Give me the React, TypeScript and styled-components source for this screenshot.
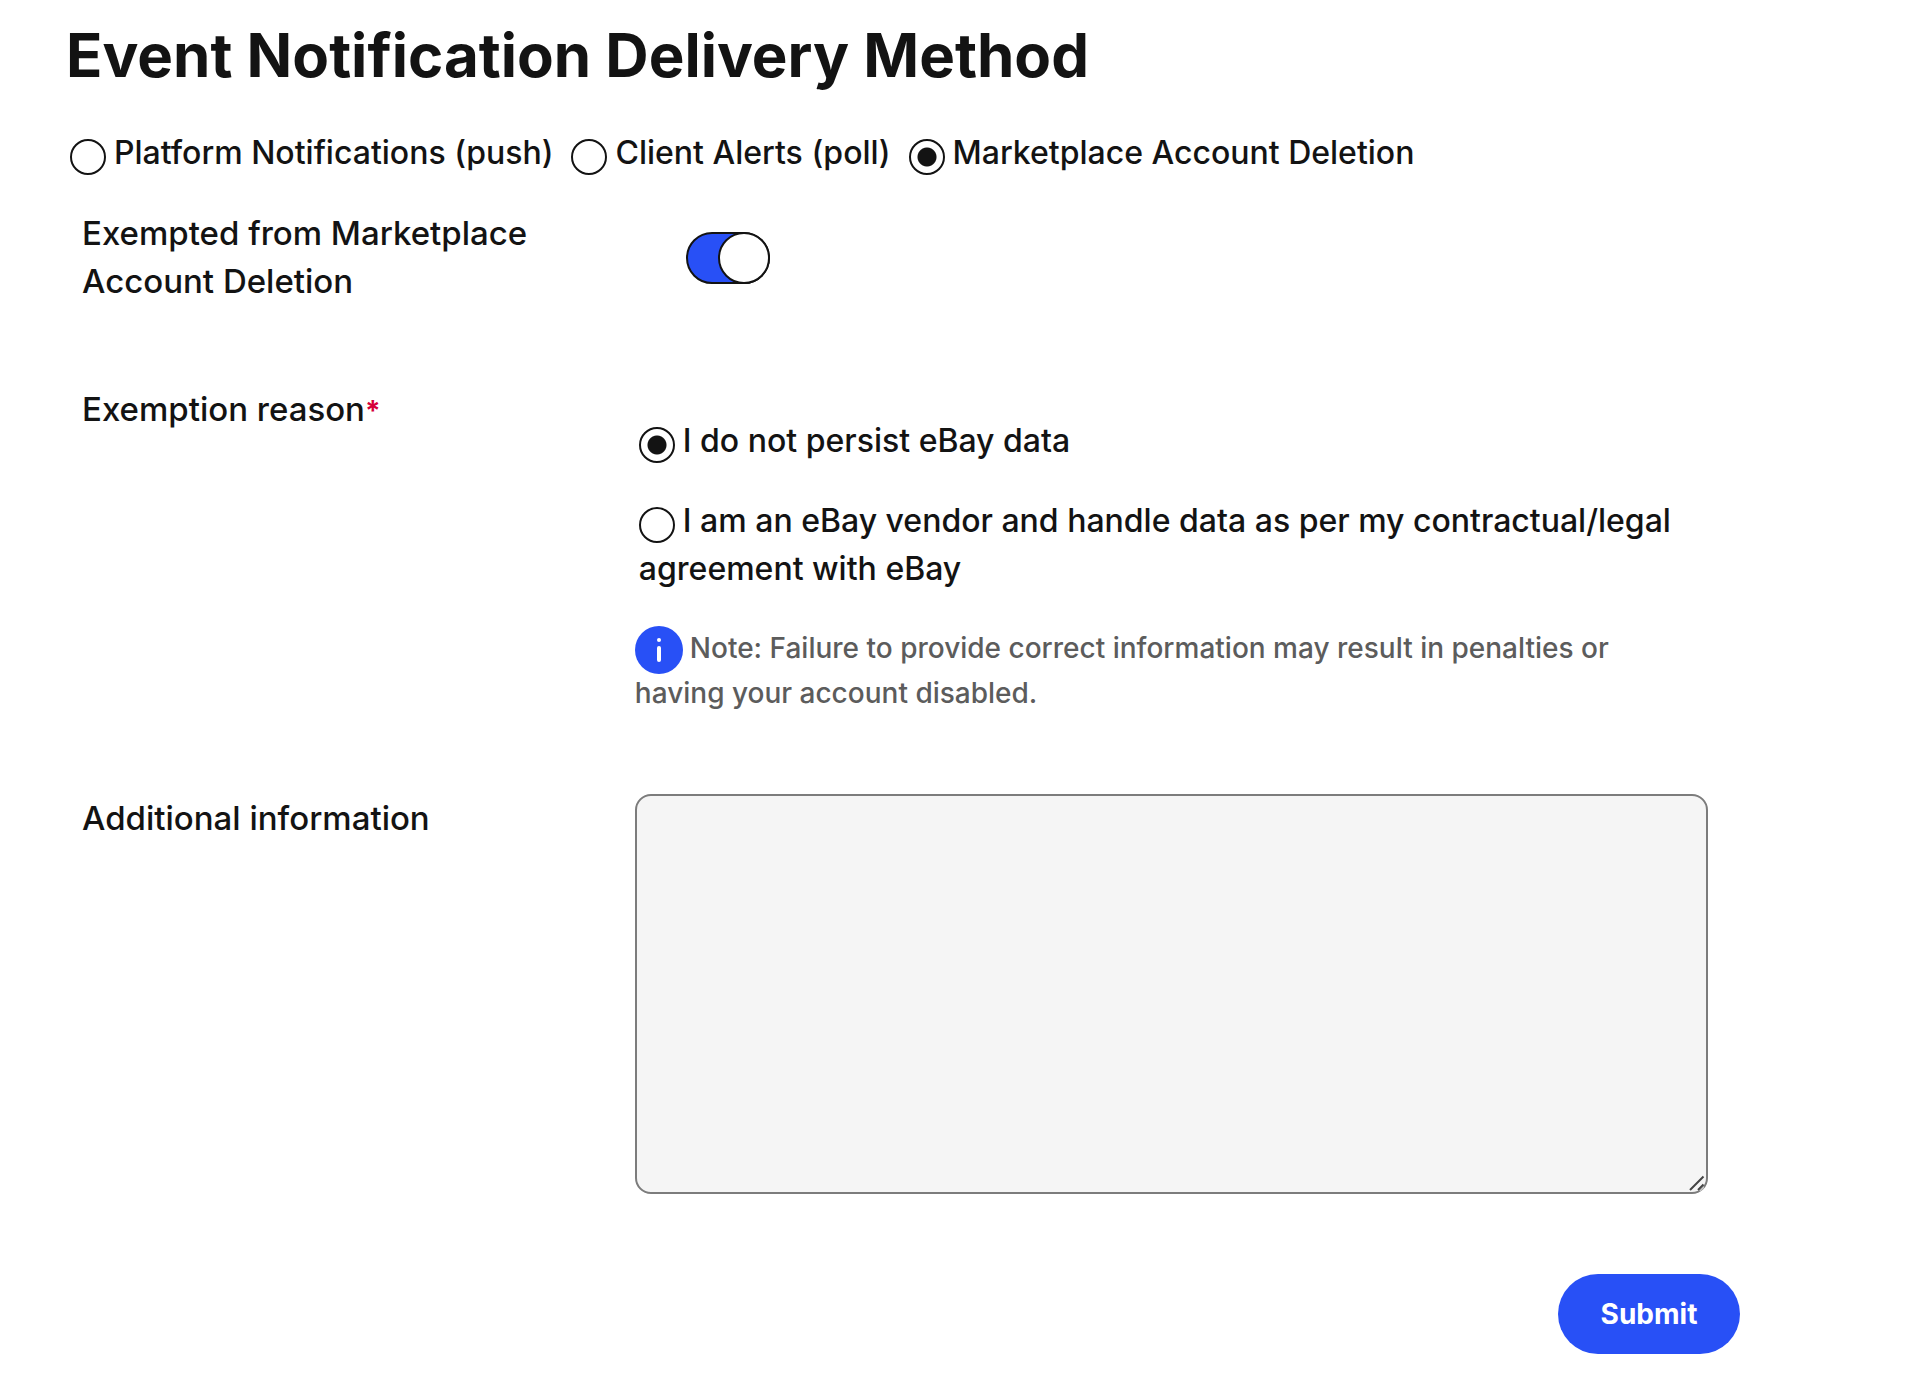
import React, { useState } from "react";
import styled, { createGlobalStyle } from "styled-components";

const ink = "#131313";
const blue = "#2850f6";

const GlobalStyle = createGlobalStyle`
  *, *::before, *::after { box-sizing: border-box; }
  body {
    margin: 0;
    background: #fff;
    color: ${ink};
    font-family: Inter, "Liberation Sans", sans-serif;
    font-size: 32px;
    font-weight: 500;
    line-height: 48px;
  }
`;

const Page = styled.main`
  padding: 17px 172px 20px 66px;
`;

const Title = styled.h1`
  margin: 0;
  font-size: 60px;
  font-weight: 700;
  line-height: 76px;
`;

const Methods = styled.fieldset`
  margin: 36px 0 0;
  padding: 0 0 0 4px;
  border: 0;
  display: flex;
  flex-wrap: wrap;
  column-gap: 18px;
`;

const HiddenLegend = styled.legend`
  position: absolute;
  width: 1px;
  height: 1px;
  overflow: hidden;
  clip-path: inset(50%);
`;

const Radio = styled.input`
  appearance: none;
  width: 36px;
  height: 36px;
  margin: 0 8px 0 0;
  border: 2px solid ${ink};
  border-radius: 50%;
  background: #fff;
  vertical-align: -11px;

  &:checked {
    background: radial-gradient(circle, ${ink} 0 9px, transparent 10px);
  }
`;

const Row = styled.div<{ $gap: number }>`
  display: grid;
  grid-template-columns: 34% 66%;
  align-items: start;
  margin-top: ${(p) => p.$gap}px;
  padding: 0 32px 0 16px;
`;

const Caption = styled.div`
  max-width: 480px;
  font-size: 33px;
`;

const Required = styled.span`
  color: #d5003a;
  font-size: 28px;
  font-weight: 700;
  line-height: 1;
`;

const Switch = styled.input`
  appearance: none;
  display: flex;
  justify-content: flex-end;
  width: 84px;
  height: 52px;
  margin: 23px 0 0 51px;
  border: 2px solid ${ink};
  border-radius: 26px;
  background: #fff;

  &::before {
    content: "";
    width: 52px;
    height: 52px;
    margin: -2px;
    border: 2px solid ${ink};
    border-radius: 50%;
    background: #fff;
  }

  &:checked { background: ${blue}; }
  &:not(:checked) { justify-content: flex-start; }
`;

const Reasons = styled.div`
  display: flex;
  flex-direction: column;
  gap: 32px;
  padding: 32px 0 0 4px;
`;

const Note = styled.p`
  margin: 33px 0 0;
  padding-right: 64px;
  color: #5c5c5c;
  font-size: 28px;
  line-height: 45px;
`;

const InfoIcon = styled.svg`
  width: 48px;
  height: 48px;
  margin: -8px 7px -8px 0;
  vertical-align: -8px;
`;

const TextAreaFrame = styled.div`
  position: relative;
`;

const TextArea = styled.textarea`
  display: block;
  width: 100%;
  height: 400px;
  padding: 16px;
  border: 2px solid #7c7c7c;
  border-radius: 16px;
  background: #f5f5f5;
  color: inherit;
  font: inherit;
  resize: vertical;

  &::-webkit-resizer { background: transparent; }
`;

const Grip = styled.svg`
  position: absolute;
  right: 2px;
  bottom: 2px;
  width: 18px;
  height: 18px;
  pointer-events: none;
`;

const Actions = styled.div`
  display: flex;
  justify-content: flex-end;
  margin-top: 80px;
`;

const SubmitButton = styled.button`
  min-width: 182px;
  height: 80px;
  padding: 0 40px;
  border: 0;
  border-radius: 40px;
  background: ${blue};
  color: #fff;
  font: inherit;
  font-size: 28px;
  font-weight: 700;
`;

const methods = [
  "Platform Notifications (push)",
  "Client Alerts (poll)",
  "Marketplace Account Deletion",
];

const reasons = [
  "I do not persist eBay data",
  "I am an eBay vendor and handle data as per my contractual/legal agreement with eBay",
];

export default function App() {
  const [method, setMethod] = useState(2);
  const [reason, setReason] = useState(0);
  const [exempted, setExempted] = useState(true);

  return (
    <>
      <GlobalStyle />
      <Page>
        <Title>Event Notification Delivery Method</Title>
        <form onSubmit={(e) => e.preventDefault()}>
          <Methods>
            <HiddenLegend aria-label="Delivery method" />
            {methods.map((text, i) => (
              <label key={text}>
                <Radio type="radio" name="method" checked={method === i} onChange={() => setMethod(i)} />
                {text}
              </label>
            ))}
          </Methods>

          <Row $gap={32}>
            <Caption as="label" htmlFor="exempted">
              Exempted from Marketplace Account Deletion
            </Caption>
            <Switch
              id="exempted"
              type="checkbox"
              role="switch"
              checked={exempted}
              onChange={(e) => setExempted(e.target.checked)}
            />
          </Row>

          <Row $gap={80}>
            <Caption id="reason-caption">
              Exemption reason<Required>*</Required>
            </Caption>
            <div>
              <Reasons role="radiogroup" aria-labelledby="reason-caption">
                {reasons.map((text, i) => (
                  <label key={text}>
                    <Radio type="radio" name="reason" checked={reason === i} onChange={() => setReason(i)} />
                    {text}
                  </label>
                ))}
              </Reasons>
              <Note>
                <InfoIcon viewBox="0 0 48 48" aria-hidden="true">
                  <circle cx="24" cy="24" r="24" fill={blue} />
                  <circle cx="24" cy="14" r="2" fill="#fff" />
                  <path d="M24 22v12" stroke="#fff" strokeWidth="4" strokeLinecap="round" />
                </InfoIcon>
                Note: Failure to provide correct information may result in penalties or having your
                account disabled.
              </Note>
            </div>
          </Row>

          <Row $gap={78}>
            <Caption as="label" htmlFor="additional">
              Additional information
            </Caption>
            <TextAreaFrame>
              <TextArea id="additional" />
              <Grip viewBox="0 0 18 18" fill="none" aria-hidden="true">
                <path d="M11 17l5-5v2l-3 3z" fill="#c8c8c8" />
                <path d="M2 16L15.5 2.5M10 16l5.5-5.5" stroke="#444" strokeWidth="2" />
              </Grip>
            </TextAreaFrame>
          </Row>

          <Actions>
            <SubmitButton type="submit">Submit</SubmitButton>
          </Actions>
        </form>
      </Page>
    </>
  );
}
